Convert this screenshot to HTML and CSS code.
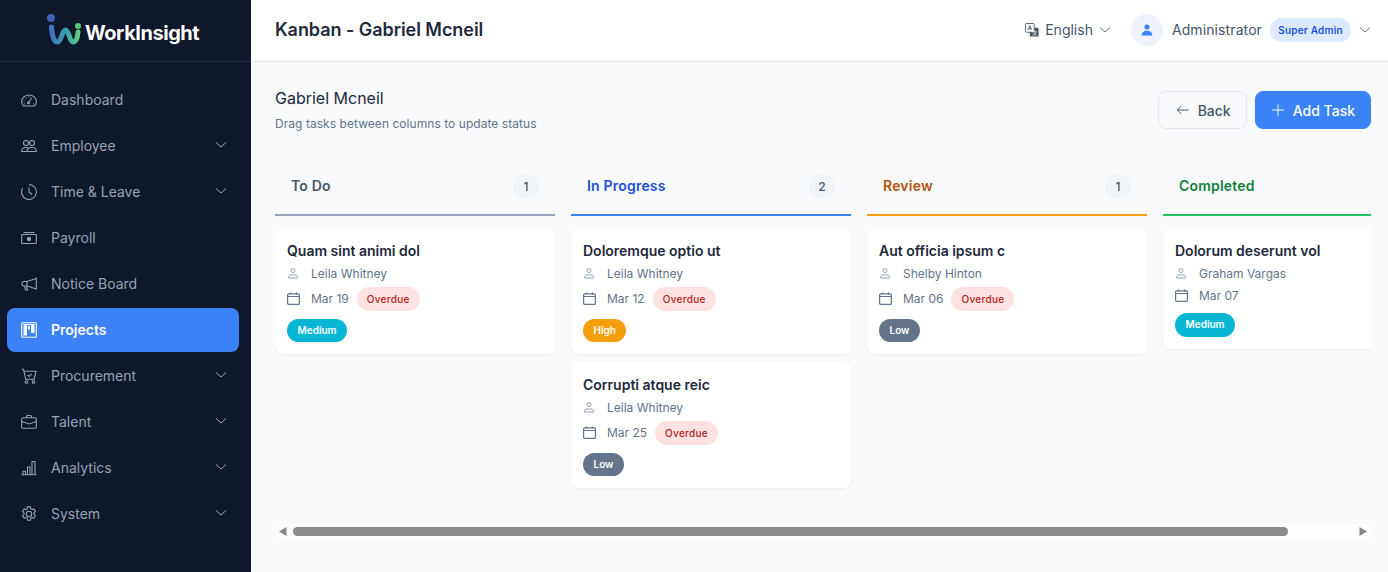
FILE: index.html
```html
<!DOCTYPE html>
<html lang="en">
<head>
<meta charset="utf-8">
<title>Kanban - Gabriel Mcneil</title>
<link rel="stylesheet" href="styles.css">
</head>
<body>
<div class="app">
  <aside class="sidebar">
    <div class="brand">
      <svg class="brand-mark" viewBox="0 0 34 32" fill="none">
        <defs><linearGradient id="lg" gradientUnits="userSpaceOnUse" x1="2" y1="0" x2="33" y2="0"><stop offset="0" stop-color="#3f6fc0"/><stop offset="0.55" stop-color="#3aa0b0"/><stop offset="1" stop-color="#5fd07a"/></linearGradient></defs>
        <path d="M4.500 13C5 22 7 28 10.500 28C14.500 28 15 16 18.500 16C22 16 22.500 28 26 28C29 28 30.500 24 31 18" stroke="url(#lg)" stroke-width="5" stroke-linecap="round"/>
        <circle cx="4" cy="4" r="4" fill="#3f62bb"/>
        <circle cx="31" cy="12" r="3" fill="#55c878"/>
      </svg>
      <span class="brand-name">WorkInsight</span>
    </div>
    <nav class="nav">
      <a class="nav-item"><svg class="nav-icon" viewBox="0 0 16 16"><path d="M2.500 14C1 12.800.6 11 .6 9.500A7.400 6.500 0 0 1 15.400 9.500C15.400 11 15 12.800 13.500 14Z"/><path d="M7.500 10.500 10.800 6"/><circle cx="7.500" cy="10.800" r="1"/><path d="M8 4.500v1M4.500 5.700l.7.7M2.500 9h1M3 12h1M12 12h1"/></svg><span class="nav-label">Dashboard</span></a>
      <a class="nav-item"><svg class="nav-icon" viewBox="0 0 16 16"><circle cx="5" cy="5" r="2.500"/><circle cx="11" cy="5" r="2.500"/><path d="M.7 13.500c0-2.500 1.500-4 3.600-4h1c1 0 1.600.3 2.200.8.600-.5 1.300-.8 2.200-.8h2c2.200 0 3.600 1.500 3.600 4Z"/><path d="M7.500 10.300c-1 .8-1.500 1.900-1.500 3.200"/></svg><span class="nav-label">Employee</span><svg class="chev" viewBox="0 0 12 12"><path d="M1 3.500 6 8 11 3.500"/></svg></a>
      <a class="nav-item"><svg class="nav-icon" viewBox="0 0 16 16"><path d="M8 .6A7.400 7.400 0 1 1 1.600 4.300"/><path d="M8 3.500V8l3 2.500"/></svg><span class="nav-label">Time &amp; Leave</span><svg class="chev" viewBox="0 0 12 12"><path d="M1 3.500 6 8 11 3.500"/></svg></a>
      <a class="nav-item"><svg class="nav-icon" viewBox="0 0 16 16"><rect x=".7" y="4.500" width="14.600" height="9" rx=".6"/><path d="M2.500 2.500h11"/><circle class="solid" cx="8" cy="9" r="1.600"/></svg><span class="nav-label">Payroll</span></a>
      <a class="nav-item"><svg class="nav-icon" viewBox="0 0 16 16"><path d="M15.300 1.500v12"/><path d="M15.300 2.500 6 5.500H2.500a1.500 1.500 0 0 0-1.500 1.500v1.500a1.500 1.500 0 0 0 1.500 1.500H6l9.300 3"/><path d="M6 5.500v5M3.500 10.500l1 3.500h2l-1-3.300"/></svg><span class="nav-label">Notice Board</span></a>
      <a class="nav-item active"><svg class="nav-icon" viewBox="0 0 16 16"><rect x=".7" y=".7" width="14.600" height="14.600" rx="1"/><path class="filled" d="M2.500 2h3.500v11.500H2.500zM6 2h4v1H6zM7 4h2v3.500H7zM10 2h3.500v9H10z"/></svg><span class="nav-label">Projects</span></a>
      <a class="nav-item"><svg class="nav-icon" viewBox="0 0 16 16"><path d="M.7 1.200h1.800l2.200 10h8.500l1.800-8H3"/><circle cx="5.500" cy="14" r="1.300"/><circle cx="12.500" cy="14" r="1.300"/><path d="m6.500 7 1.500 1.500 2.700-2.700"/></svg><span class="nav-label">Procurement</span><svg class="chev" viewBox="0 0 12 12"><path d="M1 3.500 6 8 11 3.500"/></svg></a>
      <a class="nav-item"><svg class="nav-icon" viewBox="0 0 16 16"><rect x=".7" y="3.800" width="14.600" height="10.500" rx="1"/><path d="M5.500 3.800V2.500a1 1 0 0 1 1-1h3a1 1 0 0 1 1 1v1.300M.7 7.500 8 10l7.300-2.500"/></svg><span class="nav-label">Talent</span><svg class="chev" viewBox="0 0 12 12"><path d="M1 3.500 6 8 11 3.500"/></svg></a>
      <a class="nav-item"><svg class="nav-icon" viewBox="0 0 16 16"><path d="M.5 14.700h15M2 14.700v-3.500h2.500v3.500M6.500 14.700V7h2.500v7.700M11 14.700V1.500h3v13.200"/></svg><span class="nav-label">Analytics</span><svg class="chev" viewBox="0 0 12 12"><path d="M1 3.500 6 8 11 3.500"/></svg></a>
      <a class="nav-item"><svg class="nav-icon" viewBox="0 0 16 16"><circle cx="8" cy="8" r="2.700"/><path d="M6.600 .9h2.800l.4 2 1.300.7 1.900-.6 1.400 2.400-1.400 1.400v1.500l1.400 1.400-1.400 2.400-1.900-.6-1.300.7-.4 2H6.600l-.4-2-1.300-.7-1.900.6-1.400-2.400 1.400-1.400V6.800L1.600 5.400 3 3l1.900.6 1.300-.7Z"/></svg><span class="nav-label">System</span><svg class="chev" viewBox="0 0 12 12"><path d="M1 3.500 6 8 11 3.500"/></svg></a>
    </nav>
  </aside>
  <div class="main">
    <header class="topbar">
      <h1 class="page-title">Kanban - Gabriel Mcneil</h1>
      <div class="top-actions">
        <div class="lang">
          <svg class="lang-icon" viewBox="0 0 16 16"><rect class="lang-a" x=".6" y=".6" width="10" height="10" rx="1"/><path class="lang-b" d="M6 5.500h8.500a1 1 0 0 1 1 1v8a1 1 0 0 1-1 1h-8a1 1 0 0 1-1-1V10.500h5.500V5.500Z"/><path class="lang-a" d="m3.500 8 2-5 2 5M4.200 6.500h2.600"/><path class="lang-c" d="M8 10h5.500M10.700 8.800V10M12.500 10c-.5 2-2 3.500-4 4M9.500 11.500c.8 1.200 2 2 3.800 2.400"/></svg>
          <span>English</span>
          <svg class="chev-dark" viewBox="0 0 12 12"><path d="M1 3.500 6 8 11 3.500"/></svg>
        </div>
        <div class="user">
          <span class="avatar"><svg viewBox="0 0 12 12"><circle cx="6" cy="3" r="2.600"/><path d="M.6 11.500c0-3 2.200-4.700 5.400-4.700s5.400 1.700 5.400 4.700Z"/></svg></span>
          <span class="user-name">Administrator</span>
          <span class="role">Super Admin</span>
          <svg class="chev-dark user-chev" viewBox="0 0 12 12"><path d="M1 3.500 6 8 11 3.500"/></svg>
        </div>
      </div>
    </header>
    <main class="content">
      <div class="page-head">
        <div>
          <h2 class="person">Gabriel Mcneil</h2>
          <p class="hint">Drag tasks between columns to update status</p>
        </div>
        <div class="head-actions">
          <button class="btn btn-ghost"><svg viewBox="0 0 16 16"><path d="M14.500 8H1.500M6 3.500 1.500 8 6 12.500"/></svg>Back</button>
          <button class="btn btn-primary"><svg viewBox="0 0 16 16"><path d="M8 1.500v13M1.500 8h13"/></svg>Add Task</button>
        </div>
      </div>
      <div class="board">
        <section class="column">
          <div class="col-head todo"><span class="col-title">To Do</span><span class="count">1</span></div>
          <div class="cards">
            <article class="card">
              <h3>Quam sint animi dol</h3>
              <div class="meta"><span class="meta-icon"><svg class="i-user" viewBox="0 0 12 12"><circle cx="6" cy="3.500" r="2"/><path d="M1.500 11v-.8C1.500 8.800 2.600 8 4 8h4c1.400 0 2.500.8 2.500 2.200v.8Z"/></svg></span>Leila Whitney</div>
              <div class="meta meta-date late"><span class="meta-icon"><svg class="i-cal" viewBox="0 0 13 13"><rect x=".6" y="1.800" width="11.800" height="10.600" rx="1"/><path d="M.6 4.500h11.800M3.500.5v2M9.500.5v2"/></svg></span>Mar 19<span class="overdue">Overdue</span></div>
              <span class="prio medium">Medium</span>
            </article>
          </div>
        </section>
        <section class="column">
          <div class="col-head progress"><span class="col-title">In Progress</span><span class="count">2</span></div>
          <div class="cards">
            <article class="card">
              <h3>Doloremque optio ut</h3>
              <div class="meta"><span class="meta-icon"><svg class="i-user" viewBox="0 0 12 12"><circle cx="6" cy="3.500" r="2"/><path d="M1.500 11v-.8C1.500 8.800 2.600 8 4 8h4c1.400 0 2.500.8 2.500 2.200v.8Z"/></svg></span>Leila Whitney</div>
              <div class="meta meta-date late"><span class="meta-icon"><svg class="i-cal" viewBox="0 0 13 13"><rect x=".6" y="1.800" width="11.800" height="10.600" rx="1"/><path d="M.6 4.500h11.800M3.500.5v2M9.500.5v2"/></svg></span>Mar 12<span class="overdue">Overdue</span></div>
              <span class="prio high">High</span>
            </article>
            <article class="card">
              <h3>Corrupti atque reic</h3>
              <div class="meta"><span class="meta-icon"><svg class="i-user" viewBox="0 0 12 12"><circle cx="6" cy="3.500" r="2"/><path d="M1.500 11v-.8C1.500 8.800 2.600 8 4 8h4c1.400 0 2.500.8 2.500 2.200v.8Z"/></svg></span>Leila Whitney</div>
              <div class="meta meta-date late"><span class="meta-icon"><svg class="i-cal" viewBox="0 0 13 13"><rect x=".6" y="1.800" width="11.800" height="10.600" rx="1"/><path d="M.6 4.500h11.800M3.500.5v2M9.500.5v2"/></svg></span>Mar 25<span class="overdue">Overdue</span></div>
              <span class="prio low">Low</span>
            </article>
          </div>
        </section>
        <section class="column">
          <div class="col-head review"><span class="col-title">Review</span><span class="count">1</span></div>
          <div class="cards">
            <article class="card">
              <h3>Aut officia ipsum c</h3>
              <div class="meta"><span class="meta-icon"><svg class="i-user" viewBox="0 0 12 12"><circle cx="6" cy="3.500" r="2"/><path d="M1.500 11v-.8C1.500 8.800 2.600 8 4 8h4c1.400 0 2.500.8 2.500 2.200v.8Z"/></svg></span>Shelby Hinton</div>
              <div class="meta meta-date late"><span class="meta-icon"><svg class="i-cal" viewBox="0 0 13 13"><rect x=".6" y="1.800" width="11.800" height="10.600" rx="1"/><path d="M.6 4.500h11.800M3.500.5v2M9.500.5v2"/></svg></span>Mar 06<span class="overdue">Overdue</span></div>
              <span class="prio low">Low</span>
            </article>
          </div>
        </section>
        <section class="column">
          <div class="col-head done"><span class="col-title">Completed</span></div>
          <div class="cards">
            <article class="card">
              <h3>Dolorum deserunt vol</h3>
              <div class="meta"><span class="meta-icon"><svg class="i-user" viewBox="0 0 12 12"><circle cx="6" cy="3.500" r="2"/><path d="M1.500 11v-.8C1.500 8.800 2.600 8 4 8h4c1.400 0 2.500.8 2.500 2.200v.8Z"/></svg></span>Graham Vargas</div>
              <div class="meta meta-date"><span class="meta-icon"><svg class="i-cal" viewBox="0 0 13 13"><rect x=".6" y="1.800" width="11.800" height="10.600" rx="1"/><path d="M.6 4.500h11.800M3.500.5v2M9.500.5v2"/></svg></span>Mar 07</div>
              <span class="prio medium">Medium</span>
            </article>
          </div>
        </section>
      </div>
      <div class="hscroll">
        <svg class="hs-arrow" viewBox="0 0 8 9"><path d="M0 4.500 7.500 0V9Z"/></svg>
        <span class="hs-thumb"></span>
        <svg class="hs-arrow hs-next" viewBox="0 0 8 9"><path d="M8 4.500 .5 0V9Z"/></svg>
      </div>
    </main>
  </div>
</div>
</body>
</html>
```
FILE: styles.css
```css
* { box-sizing: border-box; }
html, body { margin: 0; height: 100%; overflow: hidden; }
body { font-family: Inter, "Liberation Sans", sans-serif; background: #f8fafc; color: #1e293b; }
h1, h2, h3, p { margin: 0; }
svg { display: block; flex: none; }

.app { display: flex; height: 572px; }

.sidebar { width: 251px; flex: none; background: #0f172a; }
.brand { height: 62px; display: flex; align-items: center; padding-left: 47px; gap: 4px; border-bottom: 1px solid #263143; }
.brand-mark { width: 34px; height: 32px; margin-top: -1px; }
.brand-name { font-size: 20px; font-weight: 700; color: #fff; letter-spacing: -0.45px; padding-top: 4px; }
.nav { padding: 16px 12px 0 7px; display: flex; flex-direction: column; gap: 2px; }
.nav-item { height: 44px; display: flex; align-items: center; padding: 0 12px 0 14px; border-radius: 8px; color: #94a3b8; font-size: 14px; }
.nav-icon { width: 16px; height: 16px; margin-right: 14px; fill: none; stroke: currentColor; stroke-width: 1.1; }
.nav-icon .solid { fill: currentColor; }
.nav-icon .filled { fill: currentColor; stroke: none; }
.nav-label { flex: 1; padding-bottom: 2px; }
.chev { width: 12px; height: 12px; margin-bottom: 2px; fill: none; stroke: currentColor; stroke-width: 1; }
.active { background: #3b82f6; color: #fff; font-weight: 600; }

.main { flex: 1; min-width: 0; display: flex; flex-direction: column; }
.topbar { height: 62px; flex: none; background: #fff; border-bottom: 1px solid #e2e8f0; display: flex; align-items: center; justify-content: space-between; padding: 0 17px 2px 24px; }
.page-title { font-size: 18px; font-weight: 600; color: #1e293b; letter-spacing: -.05px; }
.top-actions { display: flex; align-items: center; gap: 20px; }
.lang { display: flex; align-items: center; font-size: 14px; color: #475569; }
.lang-icon { width: 14px; height: 14px; margin-right: 6px; fill: none; }
.lang-a { stroke: #475569; stroke-width: 1; fill: #fff; }
.lang-b { fill: #475569; }
.lang-c { stroke: #fff; stroke-width: .8; fill: none; }
.chev-dark { width: 12px; height: 12px; margin-left: 6px; fill: none; stroke: #64748b; stroke-width: 1; }
.user-chev { margin-left: 8px; }
.user { display: flex; align-items: center; font-size: 14px; color: #475569; }
.user-name { letter-spacing: .1px; }
.avatar { width: 32px; height: 32px; border-radius: 50%; background: #eef2fd; display: flex; align-items: center; justify-content: center; margin-right: 9px; }
.avatar svg { width: 12px; height: 12px; fill: #3b82f6; }
.role { margin-left: 8px; width: 81px; height: 24px; display: flex; align-items: center; justify-content: center; border-radius: 12px; background: #dbeafe; color: #1d4ed8; font-size: 10px; font-weight: 600; letter-spacing: .2px; }

.content { flex: 1; min-height: 0; padding: 24px 17px 0 24px; display: flex; flex-direction: column; }
.page-head { display: flex; justify-content: space-between; align-items: flex-start; height: 76px; flex: none; }
.person { font-size: 16px; font-weight: 400; color: #1e293b; line-height: 24px; }
.hint { font-size: 12px; color: #64748b; margin-top: 4px; line-height: 20px; letter-spacing: .05px; }
.head-actions { display: flex; gap: 8px; margin-top: 5px; }
.btn { height: 38px; border-radius: 8px; display: flex; align-items: center; gap: 8px; font: 500 14px Inter, "Liberation Sans", sans-serif; padding: 0 15px; }
.btn svg { width: 14px; height: 14px; fill: none; stroke: currentColor; stroke-width: 1.1; }
.btn-ghost { background: transparent; border: 1px solid #e2e8f0; color: #475569; padding: 0 15px 0 17px; }
.btn-primary { background: #3b82f6; border: 1px solid #3b82f6; color: #fff; }

.board { display: flex; flex: none; gap: 16px; overflow: hidden; padding-bottom: 36px; }
.column { width: 280px; flex: none; }
.col-head { height: 54px; padding: 0 16px 4px; display: flex; align-items: center; justify-content: space-between; font-size: 14px; font-weight: 600; letter-spacing: .2px; border-bottom: 2px solid; }
.col-title { padding-bottom: 2px; }
.count { width: 26px; height: 24px; border-radius: 12px; background: #f1f5f9; color: #475569; display: flex; align-items: center; justify-content: center; font-size: 12px; font-weight: 500; letter-spacing: 0; }
.todo { color: #475569; border-color: #94a3b8; }
.progress { color: #1d4ed8; border-color: #3b82f6; }
.review { color: #b45309; border-color: #f59e0b; }
.done { color: #15803d; border-color: #22c55e; }
.cards { display: flex; flex-direction: column; gap: 8px; padding-top: 12px; }
.card { background: #fff; border-radius: 8px; padding: 12px; box-shadow: 0 1px 3px rgba(15, 23, 42, .06); }
.card h3 { font-size: 14px; font-weight: 600; color: #1e293b; line-height: 22px; }
.meta { display: flex; align-items: center; font-size: 12px; color: #64748b; height: 22px; }
.meta-date { height: 17px; margin-top: 3px; margin-bottom: 9.4px; }
.late { height: 22px; margin-bottom: 10px; }
.meta-icon { width: 24px; flex: none; }
.i-user { width: 12px; height: 12px; fill: none; stroke: #94a3b8; stroke-width: 1; }
.i-cal { width: 13px; height: 13px; fill: none; stroke: #64748b; stroke-width: 1.2; }
.overdue { margin: 0 0 -2px 8px; height: 24px; padding: 0 10px 1px; border-radius: 12px; background: #fee2e2; color: #b91c1c; font-size: 10px; font-weight: 500; letter-spacing: .3px; display: flex; align-items: center; }
.prio { display: inline-flex; align-items: center; height: 23.2px; padding: 0 10.5px 1px; border-radius: 12px; color: #fff; font-size: 10px; font-weight: 600; vertical-align: top; }
.medium { background: #06b6d4; }
.high { background: #f59e0b; }
.low { background: #64748b; }

.hscroll { display: flex; flex: none; align-items: center; height: 15px; background: #fdfdfd; padding: 0 4px; }
.hs-arrow { width: 8px; height: 9px; fill: #888; }
.hs-next { margin-left: auto; }
.hs-thumb { width: 995px; height: 9px; margin-left: 6px; border-radius: 5px; background: #8b8b8b; }
```
